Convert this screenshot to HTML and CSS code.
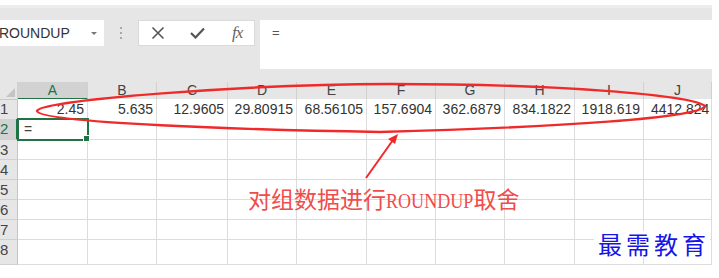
FILE: index.html
```html
<!DOCTYPE html>
<html lang="zh-CN">
<head>
  <meta charset="UTF-8">
  <title>ROUNDUP</title>
  <link rel="stylesheet" href="styles.css">
</head>
<body>
  <div class="app">
    <div class="topline"></div>

    <div class="formula-bar">
      <div class="name-box">
        <span class="name">ROUNDUP</span>
        <span class="caret"></span>
      </div>
      <div class="grip"><i></i><i></i><i></i></div>
      <div class="fx-buttons">
        <svg width="14" height="14" viewBox="0 0 14 14"><path d="M1.5 1.5 L12.5 12.5 M12.5 1.5 L1.5 12.5" stroke="#555" stroke-width="1.6" fill="none"/></svg>
        <svg width="15" height="12" viewBox="0 0 15 12"><path d="M1 6 L5.5 10.5 L14 1.5" stroke="#555" stroke-width="2.2" fill="none"/></svg>
        <span class="fx">fx</span>
      </div>
      <div class="formula-input">=</div>
    </div>

    <div class="sheet">
      <div class="row head">
        <div class="corner"></div>
        <div class="ch sel">A</div><div class="ch">B</div><div class="ch">C</div><div class="ch">D</div><div class="ch">E</div>
        <div class="ch">F</div><div class="ch">G</div><div class="ch">H</div><div class="ch">I</div><div class="ch">J</div>
      </div>
      <div class="row r20">
        <div class="rh">1</div>
        <div class="c">2.45</div><div class="c">5.635</div><div class="c">12.9605</div><div class="c">29.80915</div><div class="c">68.56105</div>
        <div class="c">157.6904</div><div class="c">362.6879</div><div class="c">834.1822</div><div class="c">1918.619</div><div class="c over">4412.824</div>
      </div>
      <div class="row r21">
        <div class="rh sel">2</div>
        <div class="c active">=</div><div class="c"></div><div class="c"></div><div class="c"></div><div class="c"></div>
        <div class="c"></div><div class="c"></div><div class="c"></div><div class="c"></div><div class="c"></div>
      </div>
      <div class="row r20">
        <div class="rh">3</div>
        <div class="c"></div><div class="c"></div><div class="c"></div><div class="c"></div><div class="c"></div>
        <div class="c"></div><div class="c"></div><div class="c"></div><div class="c"></div><div class="c"></div>
      </div>
      <div class="row r20">
        <div class="rh">4</div>
        <div class="c"></div><div class="c"></div><div class="c"></div><div class="c"></div><div class="c"></div>
        <div class="c"></div><div class="c"></div><div class="c"></div><div class="c"></div><div class="c"></div>
      </div>
      <div class="row r20">
        <div class="rh">5</div>
        <div class="c"></div><div class="c"></div><div class="c"></div><div class="c"></div><div class="c"></div>
        <div class="c"></div><div class="c"></div><div class="c"></div><div class="c"></div><div class="c"></div>
      </div>
      <div class="row r20">
        <div class="rh">6</div>
        <div class="c"></div><div class="c"></div><div class="c"></div><div class="c"></div><div class="c"></div>
        <div class="c"></div><div class="c"></div><div class="c"></div><div class="c"></div><div class="c"></div>
      </div>
      <div class="row r20">
        <div class="rh">7</div>
        <div class="c"></div><div class="c"></div><div class="c"></div><div class="c"></div><div class="c"></div>
        <div class="c"></div><div class="c"></div><div class="c"></div><div class="c"></div><div class="c"></div>
      </div>
      <div class="row r19">
        <div class="rh">8</div>
        <div class="c"></div><div class="c"></div><div class="c"></div><div class="c"></div><div class="c"></div>
        <div class="c"></div><div class="c"></div><div class="c"></div><div class="c"></div><div class="c"></div>
      </div>
      <div class="row r6">
        <div class="rh"></div>
        <div class="c"></div><div class="c"></div><div class="c"></div><div class="c"></div><div class="c"></div>
        <div class="c"></div><div class="c"></div><div class="c"></div><div class="c"></div><div class="c"></div>
      </div>
    </div>

    <!-- annotation drawn over the sheet -->
    <svg class="marks" width="719" height="278" viewBox="0 0 719 278">
      <path d="M37 111 C40 100 250 84 390 84 C560 84 690 95 705 106 C700 118 560 127 380 132 C250 130 40 123 37 111 Z"
            stroke="#f02a2a" stroke-width="2.4" fill="none"/>
      <path d="M366 178 L393 140" stroke="#f02a2a" stroke-width="2" fill="none"/>
      <path d="M398 134 L388 139 L395 144 Z" fill="#f02a2a"/>
    </svg>
    <div class="note">对组数据进行<span class="latin">ROUNDUP</span>取舍</div>
    <div class="brand">最需教育</div>
  </div>
</body>
</html>
```

FILE: styles.css
```css
* { box-sizing:border-box; margin:0; padding:0 }
body {
  font-family: "Liberation Sans", Arial, sans-serif;
  background:#fff;
  color:#333;
}

.app {
  position:relative;
  width:712px;
  height:265px;
}
.topline { height:5px; background:#fff; }

/* formula bar */
.formula-bar {
  height:64px;
  background:#e6e6e6;
  border-top:3px solid #ededed;
  padding-top:12px;
  display:flex;
  align-items:flex-start;
}
.name-box {
  width:104px; height:26px;
  background:#fff;
  display:flex; align-items:center; justify-content:space-between;
  padding-right:7px;
}
.name-box .name {
  font-size:14px; color:#333;
  margin-left:-1px;
}
.caret {
  width:0; height:0;
  border-left:3px solid transparent;
  border-right:3px solid transparent;
  border-top:3px solid #777;
}
.grip {
  width:34px; height:26px;
  display:flex; flex-direction:column; align-items:center; justify-content:center; gap:3px;
}
.grip i {
  display:block; width:2px; height:2px; background:#a8a8a8;
}
.fx-buttons {
  width:117px; height:26px;
  background:#fff;
  border:1px solid #dadada;
  display:flex; align-items:center;
  padding-left:12px; gap:25px;
}
.fx {
  font-family:"Liberation Serif", serif;
  font-style:italic;
  font-size:17px;
  color:#666;
  letter-spacing:-1px;
  margin-left:2px;
}
.formula-input {
  margin-left:5px;
  flex:1;
  height:49px;
  background:#fff;
  font-size:13px; color:#555;
  padding:5px 0 0 12px;
}

/* sheet */
.sheet {
  background:#e6e6e6;
  padding-top:13px;
}
.row {
  display:grid;
  grid-template-columns:18px 70px 69px 71px 69px 70px 69px 69px 70px 69px 68px;
  height:20px;
}
.row.head { height:17px; }
.row.r21 { height:21px; }
.row.r19 { height:19px; }
.row.r6 { height:6px; overflow:hidden; }

.corner {
  position:relative;
  background:#e6e6e6;
  border-right:1px solid #cfcfcf;
  border-bottom:1px solid #c8c8c8;
}
.corner::after {
  content:'';
  position:absolute; right:2px; bottom:2px;
  border-left:9px solid transparent;
  border-bottom:9px solid #c4c4c4;
}
.ch {
  background:#e6e6e6;
  border-right:1px solid #d0d0d0;
  border-bottom:1px solid #c8c8c8;
  font-size:14px; color:#444;
  text-align:center; line-height:16px;
}
.ch.sel {
  background:#d2d2d2;
  color:#217346;
  border-bottom:2px solid #217346;
}
.rh {
  background:#e6e6e6;
  border-right:1px solid #c4c4c4;
  border-bottom:1px solid #d0d0d0;
  font-size:15px; color:#444;
  line-height:19px;
  padding-left:0;
}
.rh.sel {
  background:#d2d2d2;
  color:#217346;
  border-right:2px solid #217346;
}
.c {
  background:#fff;
  border-right:1px solid #dcdcdc;
  border-bottom:1px solid #dcdcdc;
  font-size:14px; color:#333;
  text-align:right; line-height:20px;
  padding-right:3px;
  white-space:nowrap;
}
.c.over { overflow:visible; padding-right:0; text-align:left; padding-left:7px; }
.c.active {
  position:relative;
  text-align:left;
  padding-left:6px;
  outline:2px solid #217346;
  outline-offset:-1px;
  color:#444;
}
.c.active::after {
  content:'';
  position:absolute; right:-3px; bottom:-3px;
  width:5px; height:5px;
  background:#217346;
  border:1px solid #fff;
}

/* annotations */
.marks {
  position:absolute; top:0; left:0;
  pointer-events:none;
}
.note {
  position:absolute; left:248px; top:187px;
  font-family:"Noto Sans CJK SC", sans-serif;
  font-size:23px; line-height:1;
  color:#f04c4c;
  white-space:nowrap;
}
.note .latin {
  display:inline-block;
  font-family:"Liberation Serif", serif;
  font-size:21px;
  transform:scaleX(0.86);
  transform-origin:left;
  margin-right:-14px;
}
.brand {
  position:absolute; left:594px; top:231px;
  background:#fff;
  padding:1px 0 1px 4px;
  font-family:"Noto Sans CJK SC", sans-serif;
  font-size:24px; line-height:1;
  letter-spacing:4px;
  color:#1515e8;
  white-space:nowrap;
}
```
